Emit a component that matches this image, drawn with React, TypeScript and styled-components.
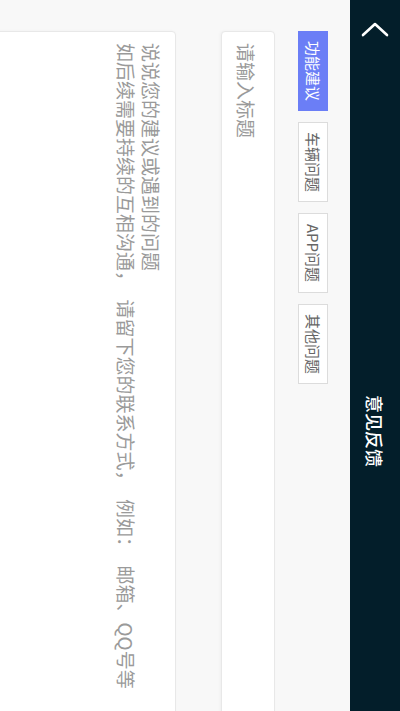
import React, { useState } from "react";
import styled, { createGlobalStyle } from "styled-components";

const Global = createGlobalStyle`
  html, body {
    margin: 0;
    padding: 0;
    overflow: hidden;
    background: #f8f8f8;
  }
  * { box-sizing: border-box; }
`;

const Viewport = styled.div`
  width: 400px;
  height: 711px;
  overflow: hidden;
  background: #f8f8f8;
`;

const Canvas = styled.div`
  width: 862px;
  height: 400px;
  transform-origin: 0 0;
  transform: translateX(400px) rotate(90deg);
  display: flex;
  flex-direction: column;
  background: #f8f8f8;
  font-family: "Noto Sans CJK SC", "Noto Sans", sans-serif;
`;

const Header = styled.header`
  height: 50px;
  flex: none;
  background: #031e2a;
  display: grid;
  grid-template-columns: 60px 1fr 60px;
  align-items: center;
`;

const BackButton = styled.button`
  width: 60px;
  height: 50px;
  padding: 0;
  border: none;
  background: transparent;
  display: flex;
  align-items: center;
  justify-content: center;
  cursor: pointer;
`;

const Title = styled.h1`
  margin: 0;
  text-align: center;
  color: #ffffff;
  font-size: 18px;
  font-weight: 500;
  letter-spacing: 0;
`;

const Body = styled.main`
  flex: 1;
  padding: 22px 31px 0 31px;
  display: flex;
  flex-direction: column;
`;

const Tabs = styled.div`
  display: flex;
  gap: 11px;
`;

const Tab = styled.button<{ $active?: boolean }>`
  width: 80px;
  height: 30px;
  padding: 0;
  font-family: inherit;
  font-size: 15px;
  line-height: 28px;
  border: 1px solid ${(p) => (p.$active ? "#6b7ef6" : "#dcdcdc")};
  background: ${(p) => (p.$active ? "#6b7ef6" : "#ffffff")};
  color: ${(p) => (p.$active ? "#ffffff" : "#666666")};
  border-radius: 0;
  cursor: pointer;
`;

const TitleInput = styled.input`
  margin-top: 23px;
  height: 54px;
  width: 100%;
  padding: 2px 11px 0 11px;
  border: 1px solid #e8e8e8;
  border-radius: 4px;
  background: #ffffff;
  box-shadow: 0 1px 3px rgba(0, 0, 0, 0.04);
  font-family: inherit;
  font-size: 19px;
  color: #333;
  outline: none;
  &::placeholder { color: #9a9a9a; }
`;

const Content = styled.textarea`
  margin-top: 45px;
  height: 220px;
  width: 100%;
  padding: 11px;
  border: 1px solid #e8e8e8;
  border-radius: 4px;
  background: #ffffff;
  box-shadow: 0 1px 3px rgba(0, 0, 0, 0.04);
  font-family: inherit;
  font-size: 19px;
  line-height: 25px;
  color: #333;
  resize: none;
  outline: none;
  &::placeholder { color: #9a9a9a; }
`;

const tabs = ["功能建议", "车辆问题", "APP问题", "其他问题"];

export default function App() {
  const [active, setActive] = useState(0);
  return (
    <>
      <Global />
      <Viewport>
        <Canvas>
          <Header>
            <BackButton aria-label="返回">
              <svg width="16" height="28" viewBox="0 0 16 28" fill="none">
                <polyline
                  points="13,2 2,14 13,26"
                  stroke="#ffffff"
                  strokeWidth="2.6"
                  strokeLinecap="round"
                  strokeLinejoin="round"
                />
              </svg>
            </BackButton>
            <Title>意见反馈</Title>
            <span />
          </Header>
          <Body>
            <Tabs>
              {tabs.map((t, i) => (
                <Tab key={t} $active={i === active} onClick={() => setActive(i)}>
                  {t}
                </Tab>
              ))}
            </Tabs>
            <TitleInput placeholder="请输入标题" />
            <Content
              placeholder={
                "说说您的建议或遇到的问题\n如后续需要持续的互相沟通，\u2002请留下您的联系方式，\u2002例如：\u2002邮箱、QQ号等"
              }
            />
          </Body>
        </Canvas>
      </Viewport>
    </>
  );
}
